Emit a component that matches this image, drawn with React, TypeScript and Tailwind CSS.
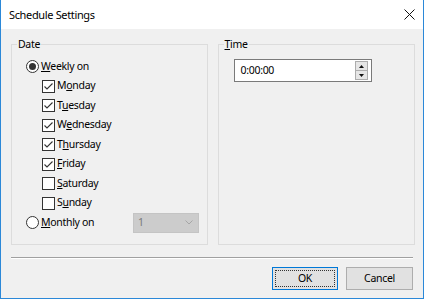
import React from "react";

const days = [
  { pre: "M", key: "o", post: "nday", on: true },
  { pre: "T", key: "u", post: "esday", on: true },
  { pre: "W", key: "e", post: "dnesday", on: true },
  { pre: "T", key: "h", post: "ursday", on: true },
  { pre: "", key: "F", post: "riday", on: true },
  { pre: "", key: "S", post: "aturday", on: false },
  { pre: "S", key: "u", post: "nday", on: false },
];

function Key({ children }: { children: React.ReactNode }) {
  return <span className="underline decoration-1 underline-offset-[1px]">{children}</span>;
}

function Radio({ on }: { on: boolean }) {
  return (
    <span className="w-[13px] h-[13px] rounded-full border border-[#333333] bg-white flex items-center justify-center shrink-0">
      {on && <span className="w-[7px] h-[7px] rounded-full bg-[#333333]" />}
    </span>
  );
}

function Check({ on }: { on: boolean }) {
  return (
    <span className="w-[13px] h-[13px] border border-[#333333] bg-white shrink-0 flex">
      {on && (
        <svg width="11" height="11" viewBox="0 0 11 11">
          <path d="M1.5 5.5 L4 8 L9.5 2.5" fill="none" stroke="#333333" strokeWidth="1.1" />
        </svg>
      )}
    </span>
  );
}

export default function App() {
  return (
    <div className="w-[424px] h-[299px] flex flex-col border-x border-b border-[#2b88d8] bg-[#f0f0f0] font-['Noto_Sans',sans-serif] text-[10.5px] tracking-[-0.3px] text-black">
      {/* Title bar */}
      <div className="h-[29px] bg-white flex items-center justify-between pl-[8px] pr-[8px] shrink-0">
        <span className="text-[11px] tracking-[-0.35px] leading-none">Schedule Settings</span>
        <svg width="11" height="11" viewBox="0 0 11 11">
          <path d="M0.5 0.5 L10.5 10.5 M10.5 0.5 L0.5 10.5" stroke="#111" strokeWidth="1" />
        </svg>
      </div>

      <div className="flex-1 flex flex-col pl-[10px] pr-[8px] pt-[8px]">
        <div className="flex gap-[10px]">
          {/* Date group */}
          <fieldset className="w-[197px] h-[208px] border border-[#dcdcdc]">
            <legend className="ml-[5px] px-[1px] leading-[14px]">Date</legend>
            <div className="pt-[6px] flex flex-col">
              <div className="h-[19.5px] flex items-center gap-[2px] pl-[14px]">
                <Radio on />
                <span>
                  <Key>W</Key>eekly on
                </span>
              </div>
              {days.map((d, i) => (
                <div key={i} className="h-[19.5px] flex items-center gap-[2px] pl-[30px]">
                  <Check on={d.on} />
                  <span>
                    {d.pre}
                    <Key>{d.key}</Key>
                    {d.post}
                  </span>
                </div>
              ))}
              <div className="h-[19.5px] flex items-center pl-[14px]">
                <div className="w-[107px] flex items-center gap-[2px]">
                  <Radio on={false} />
                  <span>
                    <Key>M</Key>onthly on
                  </span>
                </div>
                <div className="w-[66px] h-[20px] bg-[#cccccc] border border-[#c4c4c4] flex items-center justify-between pl-[4px] pr-[5px] text-[#7a7a7a]">
                  <span>1</span>
                  <svg width="8" height="5" viewBox="0 0 8 5">
                    <path d="M0.5 0.5 L4 4 L7.5 0.5" fill="none" stroke="#a6a6a6" strokeWidth="1" />
                  </svg>
                </div>
              </div>
            </div>
          </fieldset>

          {/* Time group */}
          <fieldset className="w-[198px] h-[208px] border border-[#dcdcdc]">
            <legend className="ml-[5px] px-[1px] leading-[14px]">
              <Key>T</Key>ime
            </legend>
            <div className="mt-[8px] ml-[15px] w-[138px] h-[23px] bg-white border border-[#7a7a7a] flex items-center justify-between pl-[6px] pr-[3px]">
              <span>0:00:00</span>
              <div className="flex flex-col w-[13px] h-[19px]">
                <div className="flex-1 bg-[#e6e6e6] border border-[#adadad] flex items-center justify-center">
                  <svg width="5" height="3" viewBox="0 0 5 3">
                    <path d="M0 3 L2.5 0 L5 3 Z" fill="#111" />
                  </svg>
                </div>
                <div className="flex-1 bg-[#e6e6e6] border border-t-0 border-[#adadad] flex items-center justify-center">
                  <svg width="5" height="3" viewBox="0 0 5 3">
                    <path d="M0 0 L2.5 3 L5 0 Z" fill="#111" />
                  </svg>
                </div>
              </div>
            </div>
          </fieldset>
        </div>

        {/* Separator */}
        <div className="mt-[12px] w-[402px] h-[2px] border-t border-[#a0a0a0] border-b border-b-white" />

        {/* Buttons */}
        <div className="mt-[8px] flex justify-end gap-[8px] pr-[2px]">
          <button className="w-[66px] h-[23px] bg-[#e1e1e1] border border-[#0078d7] p-[2px] flex">
            <span className="flex-1 border border-dotted border-[#333] flex items-center justify-center">OK</span>
          </button>
          <button className="w-[67px] h-[23px] bg-[#e1e1e1] border border-[#adadad] flex items-center justify-center">
            Cancel
          </button>
        </div>
      </div>
    </div>
  );
}
